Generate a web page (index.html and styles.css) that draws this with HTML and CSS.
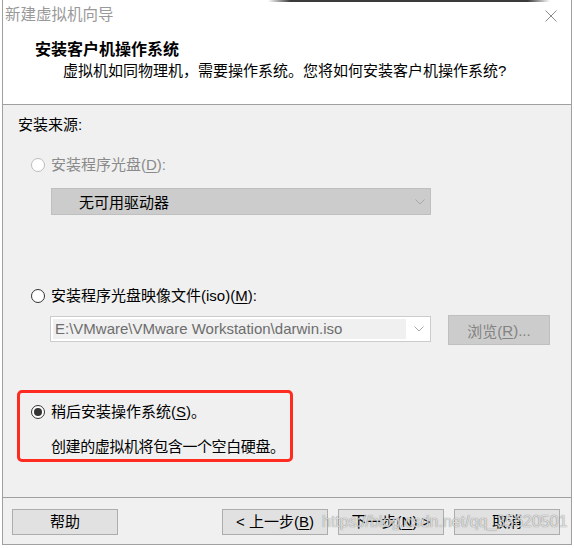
FILE: index.html
```html
<!DOCTYPE html>
<html lang="zh-CN">
<head>
<meta charset="utf-8">
<title>新建虚拟机向导</title>
<link rel="stylesheet" href="styles.css">
</head>
<body>
<div class="window">
  <div class="header">
    <div class="titlebar">
      <span class="title">新建虚拟机向导</span>
      <svg class="close" width="12" height="12" viewBox="0 0 12 12"><path d="M0.5 0.5 L11.5 11.5 M11.5 0.5 L0.5 11.5" stroke="#8a8a8a" stroke-width="1" fill="none"/></svg>
    </div>
    <div class="h-title">安装客户机操作系统</div>
    <div class="h-sub">虚拟机如同物理机，需要操作系统。您将如何安装客户机操作系统?</div>
  </div>
  <div class="content">
    <div class="label">安装来源:</div>
    <div class="radio-row r1 disabled"><span class="radio"></span><span>安装程序光盘(<u>D</u>):</span></div>
    <div class="select">
      <span>无可用驱动器</span>
      <svg class="chev" width="10" height="6" viewBox="0 0 10 6"><path d="M0.5 0.5 L5 5 L9.5 0.5" stroke="#a8a8a8" stroke-width="1" fill="none"/></svg>
    </div>
    <div class="radio-row r2"><span class="radio"></span><span>安装程序光盘映像文件(iso)(<u>M</u>):</span></div>
    <div class="iso-row">
      <div class="combo">
        <div class="field">E:\VMware\VMware Workstation\darwin.iso</div>
        <div class="drop"><svg class="chev" width="10" height="6" viewBox="0 0 10 6"><path d="M0.5 0.5 L5 5 L9.5 0.5" stroke="#a8a8a8" stroke-width="1" fill="none"/></svg></div>
      </div>
      <div class="browse">浏览(<u>R</u>)...</div>
    </div>
    <div class="highlight">
      <div class="radio-row r3"><span class="radio checked"></span><span>稍后安装操作系统(<u>S</u>)。</span></div>
      <div class="note">创建的虚拟机将包含一个空白硬盘。</div>
    </div>
  </div>
  <div class="footer">
    <div class="btn help">帮助</div>
    <div class="btn back">&lt; 上一步(<u>B</u>)</div>
    <div class="btn">下一步(<u>N</u>) &gt;</div>
    <div class="btn">取消</div>
  </div>
</div>
<div class="edge"></div>
<div class="watermark">https://blog.csdn.net/qq_35620501</div>
</body>
</html>
```

FILE: styles.css
```css
html, body {
  margin: 0;
  padding: 0;
  background: #ffffff;
}
body {
  width: 574px;
  height: 548px;
  position: relative;
  overflow: hidden;
  font-family: "Liberation Sans", "Noto Sans CJK SC", sans-serif;
  font-size: 15px;
  color: #000;
}
u {
  text-decoration: underline;
  text-underline-offset: 2px;
}
.window {
  margin-left: 2px;
  width: 570px;
  height: 545px;
  box-sizing: border-box;
  border: 1px solid #a0a0a0;
  border-top: none;
  display: flex;
  flex-direction: column;
}
.header {
  height: 104px;
  flex: none;
  background: #ffffff;
  border-bottom: 1px solid #a0a0a0;
}
.titlebar {
  height: 30px;
  display: flex;
  justify-content: space-between;
  align-items: flex-start;
  padding: 0 14px 0 2px;
}
.title {
  line-height: 30px;
  color: #999999;
  font-size: 15.5px;
}
.close {
  margin-top: 10px;
}
.h-title {
  margin-top: 10px;
  padding-left: 32px;
  line-height: 20px;
  font-size: 16px;
  font-weight: bold;
}
.h-sub {
  margin-top: 1px;
  padding-left: 60px;
  line-height: 20px;
  white-space: nowrap;
}
.content {
  flex: none;
  height: 392px;
  background: #f0f0f0;
  padding-left: 14px;
  box-sizing: border-box;
  display: flex;
  flex-direction: column;
  align-items: flex-start;
}
.label {
  margin-top: 10px;
  padding-left: 1px;
  line-height: 20px;
}
.radio-row {
  display: flex;
  align-items: center;
  height: 20px;
  line-height: 20px;
  white-space: nowrap;
}
.radio {
  width: 14px;
  height: 14px;
  box-sizing: border-box;
  border: 1px solid #333333;
  border-radius: 50%;
  background: #ffffff;
  margin-right: 6px;
  display: flex;
  align-items: center;
  justify-content: center;
  flex: none;
}
.radio.checked::after {
  content: "";
  width: 8px;
  height: 8px;
  border-radius: 50%;
  background: #333333;
}
.disabled {
  color: #8a8a8a;
}
.disabled .radio {
  border-color: #bcbcbc;
}
.r1 {
  margin-top: 20px;
  padding-left: 14px;
}
.select {
  margin: 13px 0 0 34px;
  width: 380px;
  height: 27px;
  box-sizing: border-box;
  background: #cccccc;
  border: 1px solid #bfbfbf;
  display: flex;
  align-items: center;
  justify-content: space-between;
  padding: 0 5px 0 27px;
}
.r2 {
  margin-top: 71px;
  padding-left: 14px;
}
.iso-row {
  margin-top: 9px;
  display: flex;
  align-items: flex-start;
}
.combo {
  margin: 1px 0 0 33px;
  width: 381px;
  height: 26px;
  box-sizing: border-box;
  border: 1px solid #cccccc;
  background: #ffffff;
  padding: 2px 0 2px 2px;
  display: flex;
}
.field {
  flex: 1;
  background: #f0f0f0;
  color: #6d6d6d;
  padding-left: 2px;
  line-height: 20px;
  white-space: nowrap;
  overflow: hidden;
}
.drop {
  width: 24px;
  display: flex;
  align-items: center;
  justify-content: flex-start;
  padding-left: 8px;
  box-sizing: border-box;
}
.browse {
  margin-left: 17px;
  width: 102px;
  height: 30px;
  box-sizing: border-box;
  background: #cccccc;
  border: 1px solid #bfbfbf;
  color: #838383;
  display: flex;
  align-items: center;
  justify-content: center;
}
.highlight {
  margin-top: 45px;
  width: 276px;
  height: 72px;
  box-sizing: border-box;
  border: 3px solid #ff2a20;
  border-radius: 5px;
  padding-left: 11px;
}
.r3 {
  margin-top: 9px;
}
.note {
  margin-top: 15px;
  padding-left: 20px;
  line-height: 20px;
  white-space: nowrap;
  letter-spacing: -0.4px;
}
.footer {
  border-top: 1px solid #a0a0a0;
  background: #f0f0f0;
  flex: 1;
  display: flex;
  align-items: flex-start;
  gap: 10px;
  padding: 11px 11px 0 9px;
}
.btn {
  width: 106px;
  height: 26px;
  box-sizing: border-box;
  background: #e1e1e1;
  border: 1px solid #adadad;
  display: flex;
  align-items: center;
  justify-content: center;
  line-height: 20px;
  white-space: nowrap;
}
.back {
  margin-left: auto;
}
.edge {
  position: absolute;
  left: 268px;
  top: 0;
  width: 282px;
  height: 2px;
  background: linear-gradient(to right, rgba(40,40,40,0), #3a3a3a 8%, #3a3a3a 92%, rgba(40,40,40,0));
}
.watermark {
  position: absolute;
  left: 322px;
  top: 512px;
  line-height: 20px;
  font-size: 16px;
  font-family: "Liberation Sans", sans-serif;
  color: rgba(255, 255, 255, 0.75);
  text-shadow: 0 0 1px rgba(0, 0, 0, 0.6);
  white-space: nowrap;
}
```
